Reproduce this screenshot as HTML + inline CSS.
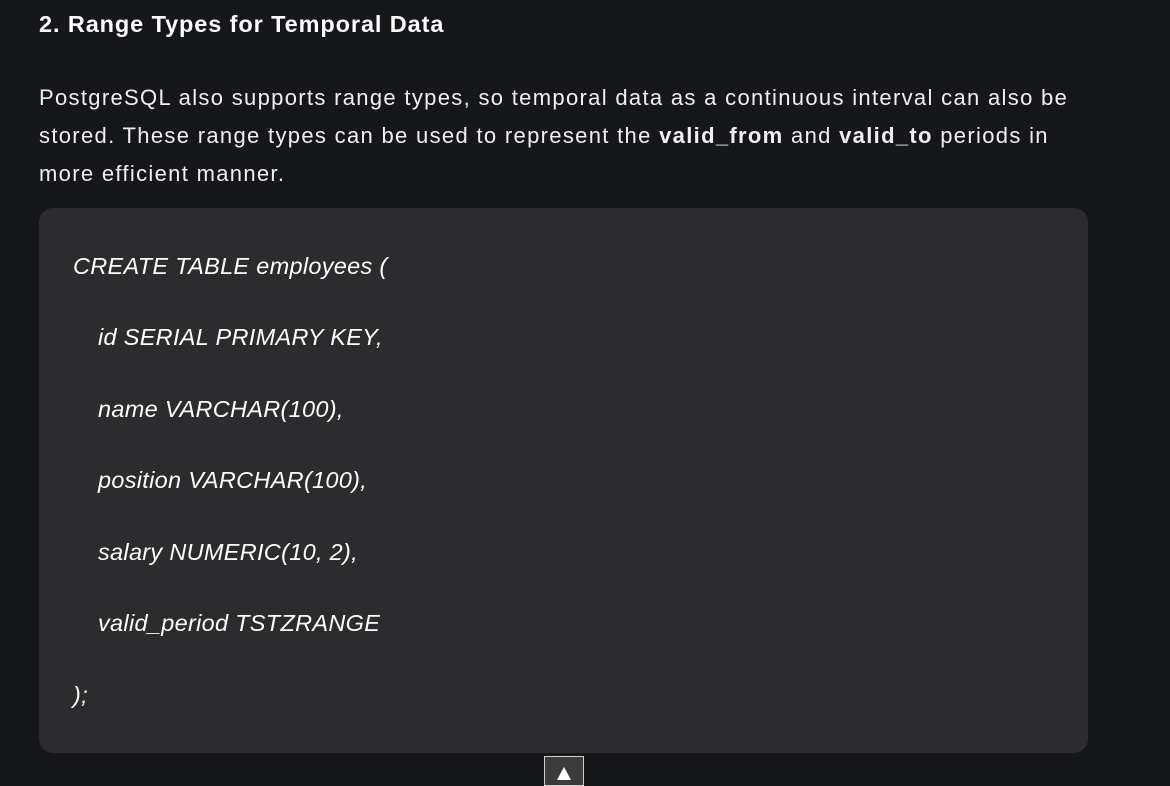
<!DOCTYPE html>
<html><head><style>
html,body{margin:0;padding:0;background:#16171b;width:1170px;height:783px;overflow:hidden;font-family:"Liberation Sans",sans-serif;color:#fff}
h2{position:absolute;left:39px;top:9px;margin:0;font-size:23.5px;letter-spacing:0.9px;font-weight:bold;line-height:30px;white-space:nowrap}
p{position:absolute;left:39px;top:79px;margin:0;width:1100px;font-size:22px;letter-spacing:1.32px;line-height:38px;color:#f0f0f0;white-space:nowrap}
.code{position:absolute;left:39px;top:208px;width:1049px;height:545px;background:#2c2c2e;border-radius:14px}
.l{position:absolute;font-style:italic;font-size:23.5px;letter-spacing:0.3px;color:#fff;line-height:30px;white-space:nowrap}
.btn{position:absolute;left:544px;top:756px;width:40px;height:30px;background:#3c3c3c;border:1px solid #d0d0d0;box-sizing:border-box}
.tri{position:absolute;left:12px;top:10px;width:0;height:0;border-left:7px solid transparent;border-right:7px solid transparent;border-bottom:13px solid #fff}
</style></head><body>
<h2>2. Range Types for Temporal Data</h2>
<p>PostgreSQL also supports range types, so temporal data as a continuous interval can also be<br>stored. These range types can be used to represent the <b>valid_from</b> and <b>valid_to</b> periods in<br>more efficient manner.</p>
<div class="code">
<div class="l" style="left:34px;top:43px">CREATE TABLE employees (</div>
<div class="l" style="left:59px;top:114px">id SERIAL PRIMARY KEY,</div>
<div class="l" style="left:59px;top:186px">name VARCHAR(100),</div>
<div class="l" style="left:59px;top:257px">position VARCHAR(100),</div>
<div class="l" style="left:59px;top:329px">salary NUMERIC(10, 2),</div>
<div class="l" style="left:59px;top:400px">valid_period TSTZRANGE</div>
<div class="l" style="left:34px;top:472px">);</div>
</div>
<div class="btn"><div class="tri"></div></div>
</body></html>
